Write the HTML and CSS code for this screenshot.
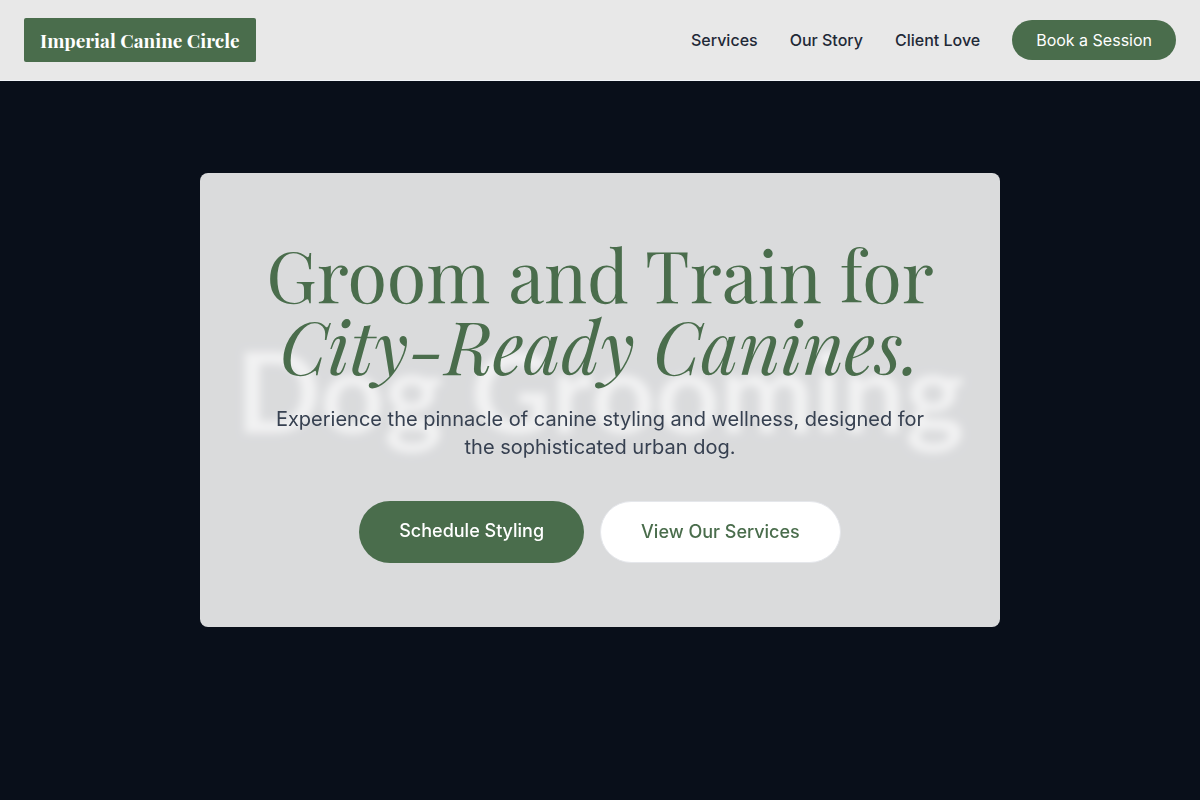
FILE: index.html
```html
<!DOCTYPE html>
<html lang="en">
<head>
    <meta charset="UTF-8">
    <meta name="viewport" content="width=device-width, initial-scale=1.0">
    <title>Imperial Canine Circle</title>
    <link rel="stylesheet" href="styles.css">
</head>
<body>
    <header class="site-header">
        <a class="logo" href="#">Imperial Canine Circle</a>
        <nav class="site-nav">
            <a href="#services">Services</a>
            <a href="#story">Our Story</a>
            <a href="#love">Client Love</a>
            <a class="nav-cta" href="#book">Book a Session</a>
        </nav>
    </header>

    <main class="hero">
        <div class="hero-backdrop" aria-hidden="true">Dog Grooming</div>
        <div class="hero-card">
            <h1>Groom and Train for<br><em>City-Ready Canines.</em></h1>
            <p>Experience the pinnacle of canine styling and wellness, designed for the sophisticated urban dog.</p>
            <div class="hero-buttons">
                <a class="btn btn-primary" href="#book">Schedule Styling</a>
                <a class="btn btn-secondary" href="#services">View Our Services</a>
            </div>
        </div>
    </main>
</body>
</html>
```

FILE: styles.css
```css
* {
    box-sizing: border-box;
}
body {
    margin: 0;
    font-family: Inter, sans-serif;
    font-size: 16px;
    line-height: 24px;
    background-color: #090f1a;
    color: #1f2937;
}
a {
    text-decoration: none;
}

/* Header */
.site-header {
    position: fixed;
    top: 0;
    left: 0;
    right: 0;
    z-index: 10;
    display: flex;
    justify-content: space-between;
    align-items: center;
    padding: 18px 24px;
    background-color: #e8e8e8;
    border-bottom: 1px solid #f1f5f9;
}
.logo {
    padding: 8px 16px;
    background-color: #4a6d4c;
    border-radius: 2px;
    color: #ffffff;
    font-family: "Playfair Display", "Liberation Serif", serif;
    font-size: 19px;
    font-weight: 700;
    line-height: 28px;
}
.site-nav {
    display: flex;
    align-items: center;
    gap: 32px;
}
.site-nav a {
    color: #1f2937;
    font-weight: 500;
}
.site-nav .nav-cta {
    padding: 8px 24px;
    background-color: #4a6d4c;
    border-radius: 20px;
    color: #ffffff;
    font-weight: 400;
}

/* Hero */
.hero {
    position: relative;
    display: flex;
    justify-content: center;
    align-items: center;
    min-height: 100vh;
    padding: 96px 24px;
}
/* Large lettering that shows through the frosted card */
.hero-backdrop {
    position: absolute;
    inset: 0;
    display: flex;
    justify-content: center;
    align-items: center;
    padding-bottom: 20px;
    color: #a5a7ab;
    font-family: Lato, sans-serif;
    font-size: 112px;
    font-weight: 700;
    line-height: 1;
    white-space: nowrap;
}
.hero-card {
    position: relative;
    width: 100%;
    max-width: 800px;
    padding: 64px;
    background-color: rgba(255, 255, 255, 0.85);
    backdrop-filter: blur(4px);
    border-radius: 8px;
    text-align: center;
}
.hero-card h1 {
    margin: 0 0 24px;
    color: #4a6d4c;
    font-family: "Playfair Display", "Liberation Serif", serif;
    font-size: 72px;
    font-weight: 400;
    line-height: 72px;
}
.hero-card p {
    max-width: 672px;
    margin: 0 auto 40px;
    color: #374151;
    font-size: 20px;
    line-height: 28px;
}
.hero-buttons {
    display: flex;
    justify-content: center;
    gap: 16px;
}
.btn {
    padding: 16px 40px;
    border-radius: 32px;
    font-size: 18px;
    font-weight: 500;
    line-height: 28px;
}
.btn-primary {
    background-color: #4a6d4c;
    color: #ffffff;
}
.btn-secondary {
    background-color: #ffffff;
    border: 1px solid #e5e7eb;
    color: #4a6d4c;
}

@media (max-width: 768px) {
    .site-nav a:not(.nav-cta) {
        display: none;
    }
    .hero-card {
        padding: 32px;
    }
    .hero-card h1 {
        font-size: 48px;
        line-height: 48px;
    }
    .hero-buttons {
        flex-direction: column;
    }
}
```
